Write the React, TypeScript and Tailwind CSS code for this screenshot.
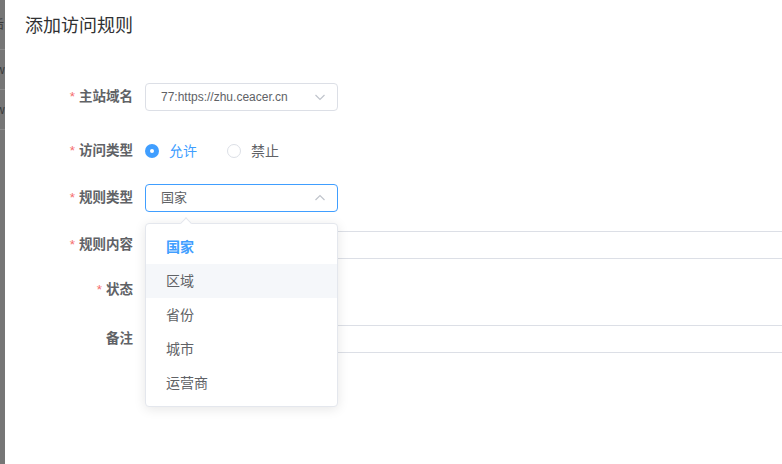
import React from "react";

const cjk = { fontFamily: '"Helvetica Neue", "Liberation Sans", "Noto Sans CJK SC", sans-serif' };

function Label({ text, required }: { text: string; required?: boolean }) {
  return (
    <div className="w-[128px] shrink-0 flex justify-end items-center text-[13.5px] font-bold text-[#606266]">
      {required && <span className="text-[#f56c6c] mr-[4px] font-normal">*</span>}
      <span>{text}</span>
    </div>
  );
}

function Chevron({ up }: { up?: boolean }) {
  return (
    <svg width="12" height="12" viewBox="0 0 12 12" className="text-[#c0c4cc]">
      {up ? (
        <path d="M1.5 8 L6 3.5 L10.5 8" fill="none" stroke="currentColor" strokeWidth="1.2" />
      ) : (
        <path d="M1.5 4 L6 8.5 L10.5 4" fill="none" stroke="currentColor" strokeWidth="1.2" />
      )}
    </svg>
  );
}

export default function App() {
  const items = ["国家", "区域", "省份", "城市", "运营商"];
  return (
    <div className="w-[782px] h-[464px] flex overflow-hidden bg-white" style={cjk}>
      <div className="w-[5px] shrink-0 bg-[#767676] flex flex-col">
        <div className="h-[50px] border-b border-[#8a8a8a] text-[12px] text-[#3a3a3a] leading-[50px] -ml-[8px] overflow-hidden">后</div>
        <div className="h-[40px] border-b border-[#8a8a8a] text-[12px] text-[#3a3a3a] leading-[40px] -ml-[4px] overflow-hidden">w</div>
        <div className="h-[40px] border-b border-[#8a8a8a] text-[12px] text-[#3a3a3a] leading-[40px] -ml-[4px] overflow-hidden">w</div>
      </div>
      <div className="flex-1 relative">
        <div className="pl-[20px] pt-[14px] text-[18px] leading-[24px] text-[#303133]">添加访问规则</div>
        <div className="flex flex-col">
          <div className="mt-[45px] flex items-center h-[28px]">
            <Label text="主站域名" required />
            <div className="ml-[12px] w-[193px] h-[28px] border border-[#dcdfe6] rounded-[4px] flex items-center justify-between pl-[15px] pr-[11px]">
              <span className="text-[12px] text-[#606266]" style={{ fontFamily: '"Liberation Sans", Arial, sans-serif' }}>77:https://zhu.ceacer.cn</span>
              <Chevron />
            </div>
          </div>
          <div className="mt-[26px] flex items-center h-[28px]">
            <Label text="访问类型" required />
            <div className="ml-[12px] flex items-center">
              <span className="w-[14px] h-[14px] rounded-full bg-[#409eff] flex items-center justify-center">
                <span className="w-[4px] h-[4px] rounded-full bg-white" />
              </span>
              <span className="ml-[10px] text-[14px] text-[#409eff]">允许</span>
              <span className="ml-[30px] w-[14px] h-[14px] rounded-full border border-[#dcdfe6] bg-white" />
              <span className="ml-[10px] text-[14px] text-[#606266]">禁止</span>
            </div>
          </div>
          <div className="mt-[19px] flex items-center h-[28px]">
            <Label text="规则类型" required />
            <div className="ml-[12px] w-[193px] h-[28px] border border-[#409eff] rounded-[4px] flex items-center justify-between pl-[15px] pr-[11px]">
              <span className="text-[13px] text-[#606266]">国家</span>
              <Chevron up />
            </div>
          </div>
          <div className="mt-[19px] flex items-center h-[28px]">
            <Label text="规则内容" required />
            <div className="ml-[12px] w-[660px] shrink-0 h-[28px] border border-[#dcdfe6] rounded-[4px]" />
          </div>
          <div className="mt-[17px] flex items-center h-[28px]">
            <Label text="状态" required />
          </div>
          <div className="mt-[21px] flex items-center h-[28px]">
            <Label text="备注" />
            <div className="ml-[12px] w-[660px] shrink-0 h-[28px] border border-[#dcdfe6] rounded-[4px]" />
          </div>
        </div>

        <div className="absolute left-[140px] top-[223px] w-[193px] bg-white border border-[#e4e7ed] rounded-[4px] shadow-[0_2px_12px_0_rgba(0,0,0,0.1)] py-[6px]">
          <div className="absolute -top-[5px] left-[36px] w-[8px] h-[8px] bg-white border-l border-t border-[#e4e7ed] rotate-45" />
          {items.map((it, i) => (
            <div
              key={it}
              className={`h-[34px] flex items-center pl-[20px] text-[14px] ${
                i === 0 ? "text-[#409eff] font-bold" : "text-[#606266]"
              } ${i === 1 ? "bg-[#f5f7fa]" : ""}`}
            >
              {it}
            </div>
          ))}
        </div>
      </div>
    </div>
  );
}
